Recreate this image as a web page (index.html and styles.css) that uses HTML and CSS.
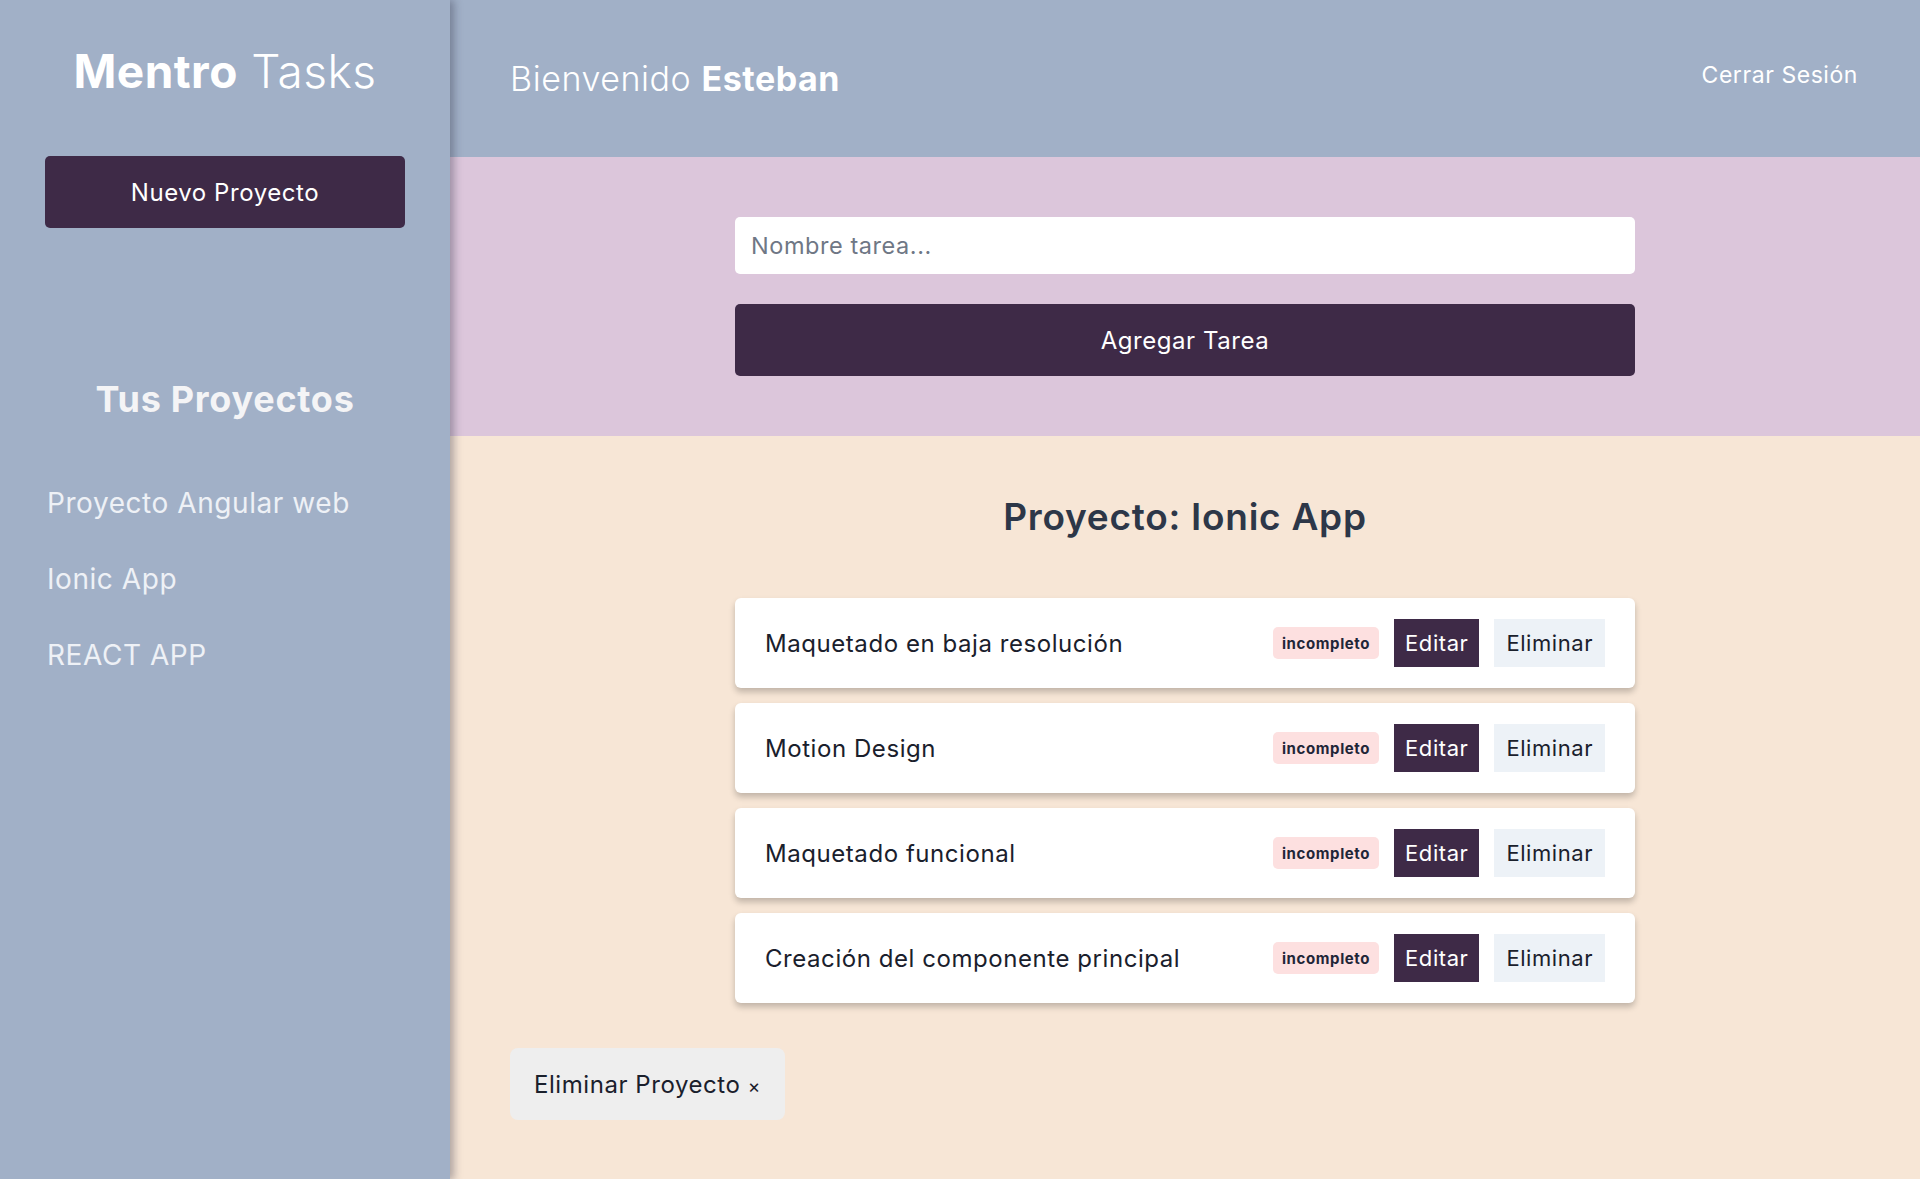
FILE: index.html
```html
<!DOCTYPE html>
<html lang="es">
<head>
<meta charset="utf-8">
<title>Mentro Tasks</title>
<link rel="stylesheet" href="styles.css">
</head>
<body>
<div class="app">
  <aside class="sidebar">
    <h1 class="brand"><span class="brand-bold">Mentro</span> <span class="brand-light">Tasks</span></h1>
    <button class="btn-new" type="button">Nuevo Proyecto</button>
    <div class="projects">
      <h2 class="projects-title">Tus Proyectos</h2>
      <ul class="project-list">
        <li><a class="project-link" href="#">Proyecto Angular web</a></li>
        <li><a class="project-link" href="#">Ionic App</a></li>
        <li><a class="project-link" href="#">REACT APP</a></li>
      </ul>
    </div>
  </aside>
  <div class="main">
    <header class="topbar">
      <p class="welcome">Bienvenido <span class="welcome-name">Esteban</span></p>
      <a class="logout" href="#">Cerrar Sesión</a>
    </header>
    <section class="form-area">
      <form class="task-form">
        <input class="task-input" type="text" placeholder="Nombre tarea...">
        <button class="btn-add" type="button">Agregar Tarea</button>
      </form>
    </section>
    <section class="tasks-area">
      <h2 class="project-heading">Proyecto: Ionic App</h2>
      <ul class="task-list">
        <li class="task">
          <span class="task-name">Maquetado en baja resolución</span>
          <div class="task-actions">
            <span class="badge">incompleto</span>
            <button class="btn-edit" type="button">Editar</button>
            <button class="btn-delete" type="button">Eliminar</button>
          </div>
        </li>
        <li class="task">
          <span class="task-name">Motion Design</span>
          <div class="task-actions">
            <span class="badge">incompleto</span>
            <button class="btn-edit" type="button">Editar</button>
            <button class="btn-delete" type="button">Eliminar</button>
          </div>
        </li>
        <li class="task">
          <span class="task-name">Maquetado funcional</span>
          <div class="task-actions">
            <span class="badge">incompleto</span>
            <button class="btn-edit" type="button">Editar</button>
            <button class="btn-delete" type="button">Eliminar</button>
          </div>
        </li>
        <li class="task">
          <span class="task-name">Creación del componente principal</span>
          <div class="task-actions">
            <span class="badge">incompleto</span>
            <button class="btn-edit" type="button">Editar</button>
            <button class="btn-delete" type="button">Eliminar</button>
          </div>
        </li>
      </ul>
      <button class="btn-remove-project" type="button">Eliminar Proyecto <span class="times">×</span></button>
    </section>
  </div>
</div>
</body>
</html>
```
FILE: styles.css
```css
* { box-sizing: border-box; }
html, body { margin: 0; padding: 0; }
body {
  font-family: Inter, "Open Sans", "DejaVu Sans", sans-serif;
  background: #f7e6d6;
  color: #1a202c;
  letter-spacing: 0.035em;
}
button, input { font-family: inherit; letter-spacing: inherit; }

.app {
  display: flex;
  min-height: 1179px;
}

/* Sidebar */
.sidebar {
  width: 450px;
  flex: 0 0 450px;
  background: #a1b0c7;
  padding: 38px 45px 0;
  box-shadow: 4px 0 8px rgba(40, 40, 60, 0.35);
  position: relative;
  z-index: 2;
}
.brand {
  margin: 0;
  text-align: center;
  font-size: 46px;
  line-height: 66px;
  color: #ffffff;
  font-weight: 400;
  letter-spacing: 0.01em;
}
.brand-bold { font-weight: 700; }
.brand-light { font-weight: 300; }

.btn-new {
  display: block;
  width: 360px;
  height: 72px;
  margin-top: 52px;
  background: #3e2a47;
  color: #ffffff;
  border: none;
  border-radius: 5px;
  font-size: 24px;
  font-weight: 400;
}

.projects { margin-top: 149px; }
.projects-title {
  margin: 0;
  text-align: center;
  font-size: 36px;
  line-height: 44px;
  font-weight: 700;
  color: #f4f4f6;
  letter-spacing: 0.02em;
}
.project-list {
  list-style: none;
  margin: 64px 0 0;
  padding: 0;
}
.project-list li { height: 76px; }
.project-link {
  display: block;
  color: #eef1f6;
  text-decoration: none;
  font-size: 28px;
  line-height: 36px;
  font-weight: 400;
  padding-left: 2px;
}

/* Main */
.main {
  flex: 1;
  display: flex;
  flex-direction: column;
}
.topbar {
  height: 157px;
  background: #a1b0c7;
  display: flex;
  align-items: center;
  justify-content: space-between;
  padding: 0 62px 0 60px;
}
.welcome {
  margin: 0;
  color: #ffffff;
  font-size: 34px;
  font-weight: 300;
}
.welcome-name { font-weight: 700; }
.logout {
  color: #ffffff;
  text-decoration: none;
  font-size: 23px;
  font-weight: 400;
  margin-bottom: 8px;
}

.form-area {
  background: #dcc6db;
  padding: 60px 0;
}
.task-form {
  width: 900px;
  margin: 0 auto;
  display: flex;
  flex-direction: column;
  gap: 30px;
}
.task-input {
  height: 57px;
  border: none;
  border-radius: 5px;
  background: #ffffff;
  padding: 0 16px;
  font-size: 23.5px;
  color: #2d3748;
  outline: none;
}
.task-input::placeholder { color: #6f7785; }
.btn-add {
  height: 72px;
  border: none;
  border-radius: 5px;
  background: #3e2a47;
  color: #ffffff;
  font-size: 24px;
}

.tasks-area {
  flex: 1;
  background: #f7e6d6;
  padding: 58px 60px 60px;
}
.project-heading {
  margin: 0;
  text-align: center;
  font-size: 37px;
  line-height: 46px;
  font-weight: 600;
  color: #2d3748;
  letter-spacing: 0.02em;
}
.task-list {
  list-style: none;
  width: 900px;
  margin: 58px auto 0;
  padding: 0;
  display: flex;
  flex-direction: column;
  gap: 15px;
}
.task {
  height: 90px;
  background: #ffffff;
  border-radius: 6px;
  box-shadow: 0 4px 6px rgba(0, 0, 0, 0.22);
  display: flex;
  align-items: center;
  justify-content: space-between;
  padding: 0 30px;
}
.task-name {
  font-size: 24px;
  color: #1a202c;
}
.task-actions {
  display: flex;
  align-items: center;
  gap: 15px;
}
.badge {
  height: 32px;
  display: inline-flex;
  align-items: center;
  padding: 0 9px;
  border-radius: 5px;
  background: #fde0e0;
  color: #1f2638;
  font-size: 15px;
  font-weight: 700;
  letter-spacing: 0.04em;
}
.btn-edit, .btn-delete {
  height: 48px;
  border: none;
  border-radius: 0;
  padding: 0 11px;
  font-size: 22px;
}
.btn-edit {
  background: #3e2a47;
  color: #ffffff;
}
.btn-delete {
  background: #edf2f7;
  color: #1a202c;
  padding: 0 12px;
}

.btn-remove-project {
  display: block;
  margin-top: 45px;
  height: 72px;
  padding: 0 24px;
  border: none;
  border-radius: 8px;
  background: #eeeeee;
  color: #1a202c;
  font-size: 24px;
}
.times { font-size: 19px; }
```
